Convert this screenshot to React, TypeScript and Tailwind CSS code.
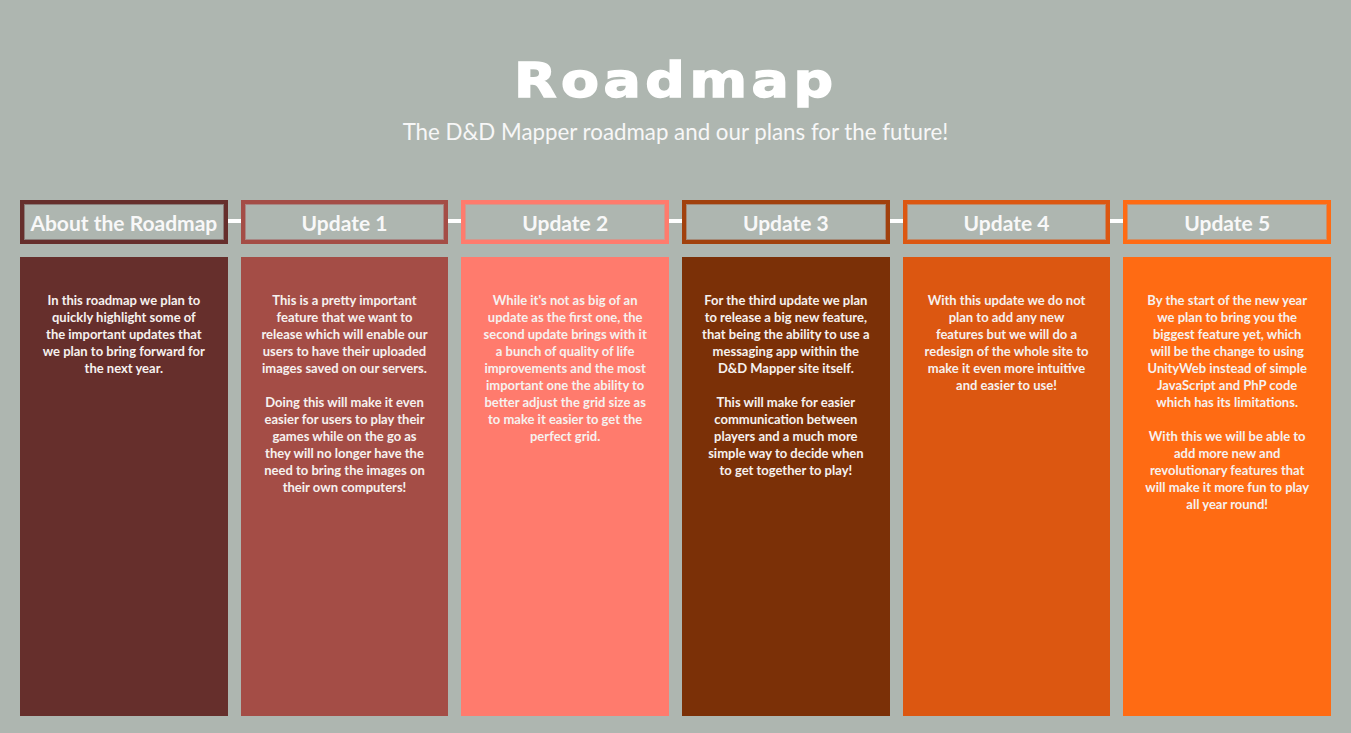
import React from 'react'

interface Update {
  title: string
  border: string
  card: string
  inner: string
  // each paragraph is a list of lines, broken as in the design
  paragraphs: string[][]
}

const updates: Update[] = [
  {
    title: 'About the Roadmap',
    border: 'border-[#662f2c]',
    card: 'bg-[#662f2c]',
    inner: 'border-[#8a7d7a]',
    paragraphs: [
      [
        'In this roadmap we plan to',
        'quickly highlight some of',
        'the important updates that',
        'we plan to bring forward for',
        'the next year.',
      ],
    ],
  },
  {
    title: 'Update 1',
    border: 'border-[#a44d46]',
    card: 'bg-[#a44d46]',
    inner: 'border-[#a88784]',
    paragraphs: [
      [
        'This is a pretty important',
        'feature that we want to',
        'release which will enable our',
        'users to have their uploaded',
        'images saved on our servers.',
      ],
      [
        'Doing this will make it even',
        'easier for users to play their',
        'games while on the go as',
        'they will no longer have the',
        'need to bring the images on',
        'their own computers!',
      ],
    ],
  },
  {
    title: 'Update 2',
    border: 'border-[#ff7b6d]',
    card: 'bg-[#ff7b6d]',
    inner: 'border-[#d2998f]',
    paragraphs: [
      [
        "While it's not as big of an",
        'update as the first one, the',
        'second update brings with it',
        'a bunch of quality of life',
        'improvements and the most',
        'important one the ability to',
        'better adjust the grid size as',
        'to make it easier to get the',
        'perfect grid.',
      ],
    ],
  },
  {
    title: 'Update 3',
    border: 'border-[#a1410d]',
    card: 'bg-[#7b3007]',
    inner: 'border-[#a58a78]',
    paragraphs: [
      [
        'For the third update we plan',
        'to release a big new feature,',
        'that being the ability to use a',
        'messaging app within the',
        'D&D Mapper site itself.',
      ],
      [
        'This will make for easier',
        'communication between',
        'players and a much more',
        'simple way to decide when',
        'to get together to play!',
      ],
    ],
  },
  {
    title: 'Update 4',
    border: 'border-[#dc5711]',
    card: 'bg-[#dc5711]',
    inner: 'border-[#c08a6a]',
    paragraphs: [
      [
        'With this update we do not',
        'plan to add any new',
        'features but we will do a',
        'redesign of the whole site to',
        'make it even more intuitive',
        'and easier to use!',
      ],
    ],
  },
  {
    title: 'Update 5',
    border: 'border-[#ff6b13]',
    card: 'bg-[#ff6b13]',
    inner: 'border-[#cf9068]',
    paragraphs: [
      [
        'By the start of the new year',
        'we plan to bring you the',
        'biggest feature yet, which',
        'will be the change to using',
        'UnityWeb instead of simple',
        'JavaScript and PhP code',
        'which has its limitations.',
      ],
      [
        'With this we will be able to',
        'add more new and',
        'revolutionary features that',
        'will make it more fun to play',
        'all year round!',
      ],
    ],
  },
]

export default function App() {
  return (
    <div className="min-h-screen w-full overflow-hidden bg-[#aeb6b0] pt-[56px] text-white" style={{ fontFamily: 'Lato, "Liberation Sans", sans-serif' }}>
      <div className="text-center">
        <h1
          className="inline-block scale-x-[1.15] text-[48px] font-bold leading-none tracking-[4px] [-webkit-text-stroke:1.5px_white]"
          style={{ fontFamily: '"DejaVu Sans", Verdana, sans-serif' }}
        >
          Roadmap
        </h1>
      </div>
      <p className="mt-[14px] text-center text-[22.3px] leading-[28px] text-[#f7f7f7]">
        The D&amp;D Mapper roadmap and our plans for the future!
      </p>

      {/* timeline headers */}
      <div className="relative mt-[54px] px-[20px]">
        <div className="absolute left-[40px] right-[40px] top-[19px] h-[4px] bg-white" />
        <div className="relative grid grid-cols-6 gap-[13px]">
          {updates.map((u) => (
            <div key={u.title} className={`h-[44px] border-4 ${u.border} bg-[#aeb6b0]`}>
              <div className={`flex h-full items-center justify-center border ${u.inner}`}>
                <span className="text-[21px] font-bold leading-none text-[#f8f8f8]">{u.title}</span>
              </div>
            </div>
          ))}
        </div>
      </div>

      {/* cards */}
      <div className="mt-[13px] grid grid-cols-6 gap-[13px] px-[20px]">
        {updates.map((u) => (
          <div key={u.title} className={`h-[459px] ${u.card} px-[8px] pt-[35px]`}>
            <div className="flex flex-col gap-[17px] text-center text-[13px] font-bold leading-[17px] text-[#f6f1ef]">
              {u.paragraphs.map((lines, i) => (
                <p key={i}>
                  {lines.map((line, j) => (
                    <span key={j} className="block whitespace-nowrap">
                      {line}
                    </span>
                  ))}
                </p>
              ))}
            </div>
          </div>
        ))}
      </div>
    </div>
  )
}
